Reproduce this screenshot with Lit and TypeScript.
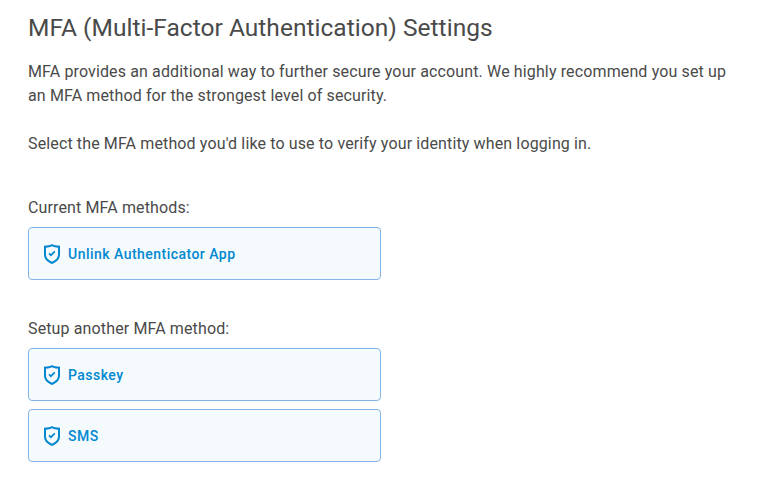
import { LitElement, html, css } from "lit";
import { customElement, property } from "lit/decorators.js";

@customElement("mfa-method")
class MfaMethod extends LitElement {
  static styles = css`
    :host { display: block; }
    .method {
      display: flex;
      align-items: center;
      gap: 4px;
      box-sizing: border-box;
      width: 353px;
      height: 53px;
      padding: 0 11px;
      border: 1px solid #84b5e5;
      border-radius: 4px;
      background: #f5fafd;
      color: #0288d1;
      font: 500 14px/24px Roboto, sans-serif;
      letter-spacing: 0.47px;
      cursor: pointer;
    }
    .icon { width: 24px; height: 24px; fill: currentColor; flex: none; }
  `;
  @property() label = "";
  render() {
    return html`<button class="method">
      <svg class="icon" viewBox="0 0 24 24" aria-hidden="true">
        <path fill-rule="evenodd" d="M12 2c-1.600 1.100-4.300 1.700-8 1.700v8.800c0 4.500 3.200 7.500 8 9.500 4.800-2 8-5 8-9.500V3.700c-3.700 0-6.400-.600-8-1.700zm0 2.300c1.700.800 3.600 1.200 6 1.350v6.850c0 3.300-2.200 5.500-6 7.300-3.800-1.800-6-4-6-7.300V5.650c2.400-.150 4.300-.550 6-1.350z"/>
        <path d="M14.200 8.700l1.200 1.200-4.500 4.600-2.500-2.500 1.200-1.200 1.300 1.300z"/>
      </svg>
      <span>${this.label}</span>
    </button>`;
  }
}

@customElement("app-root")
class AppRoot extends LitElement {
  static styles = css`
    :host {
      display: block;
      box-sizing: border-box;
      min-height: 489px;
      padding: 12px 28px 0;
      background: #fff;
      color: #4a4a4a;
      font: 400 16px/24px Roboto, sans-serif;
      letter-spacing: 0.13px;
    }
    h1 { margin: 0 0 16px; font-size: 24.5px; line-height: 32px; font-weight: 400; letter-spacing: 0.03px; }
    p { margin: 0 0 24px; width: 708px; }
    section { margin-top: 40px; }
    h2 { margin: 0 0 7px; font-size: 16px; line-height: 24px; font-weight: 400; }
    .list { display: grid; gap: 8px; }
    section + section { margin-top: 37px; }
  `;
  render() {
    return html`
      <h1>MFA (Multi-Factor Authentication) Settings</h1>
      <p>MFA provides an additional way to further secure your account. We highly recommend you set up<br />an MFA method for the strongest level of security.</p>
      <p>Select the MFA method you'd like to use to verify your identity when logging in.</p>
      <section>
        <h2>Current MFA methods:</h2>
        <div class="list"><mfa-method label="Unlink Authenticator App"></mfa-method></div>
      </section>
      <section>
        <h2>Setup another MFA method:</h2>
        <div class="list">
          <mfa-method label="Passkey"></mfa-method>
          <mfa-method label="SMS"></mfa-method>
        </div>
      </section>
    `;
  }
}
